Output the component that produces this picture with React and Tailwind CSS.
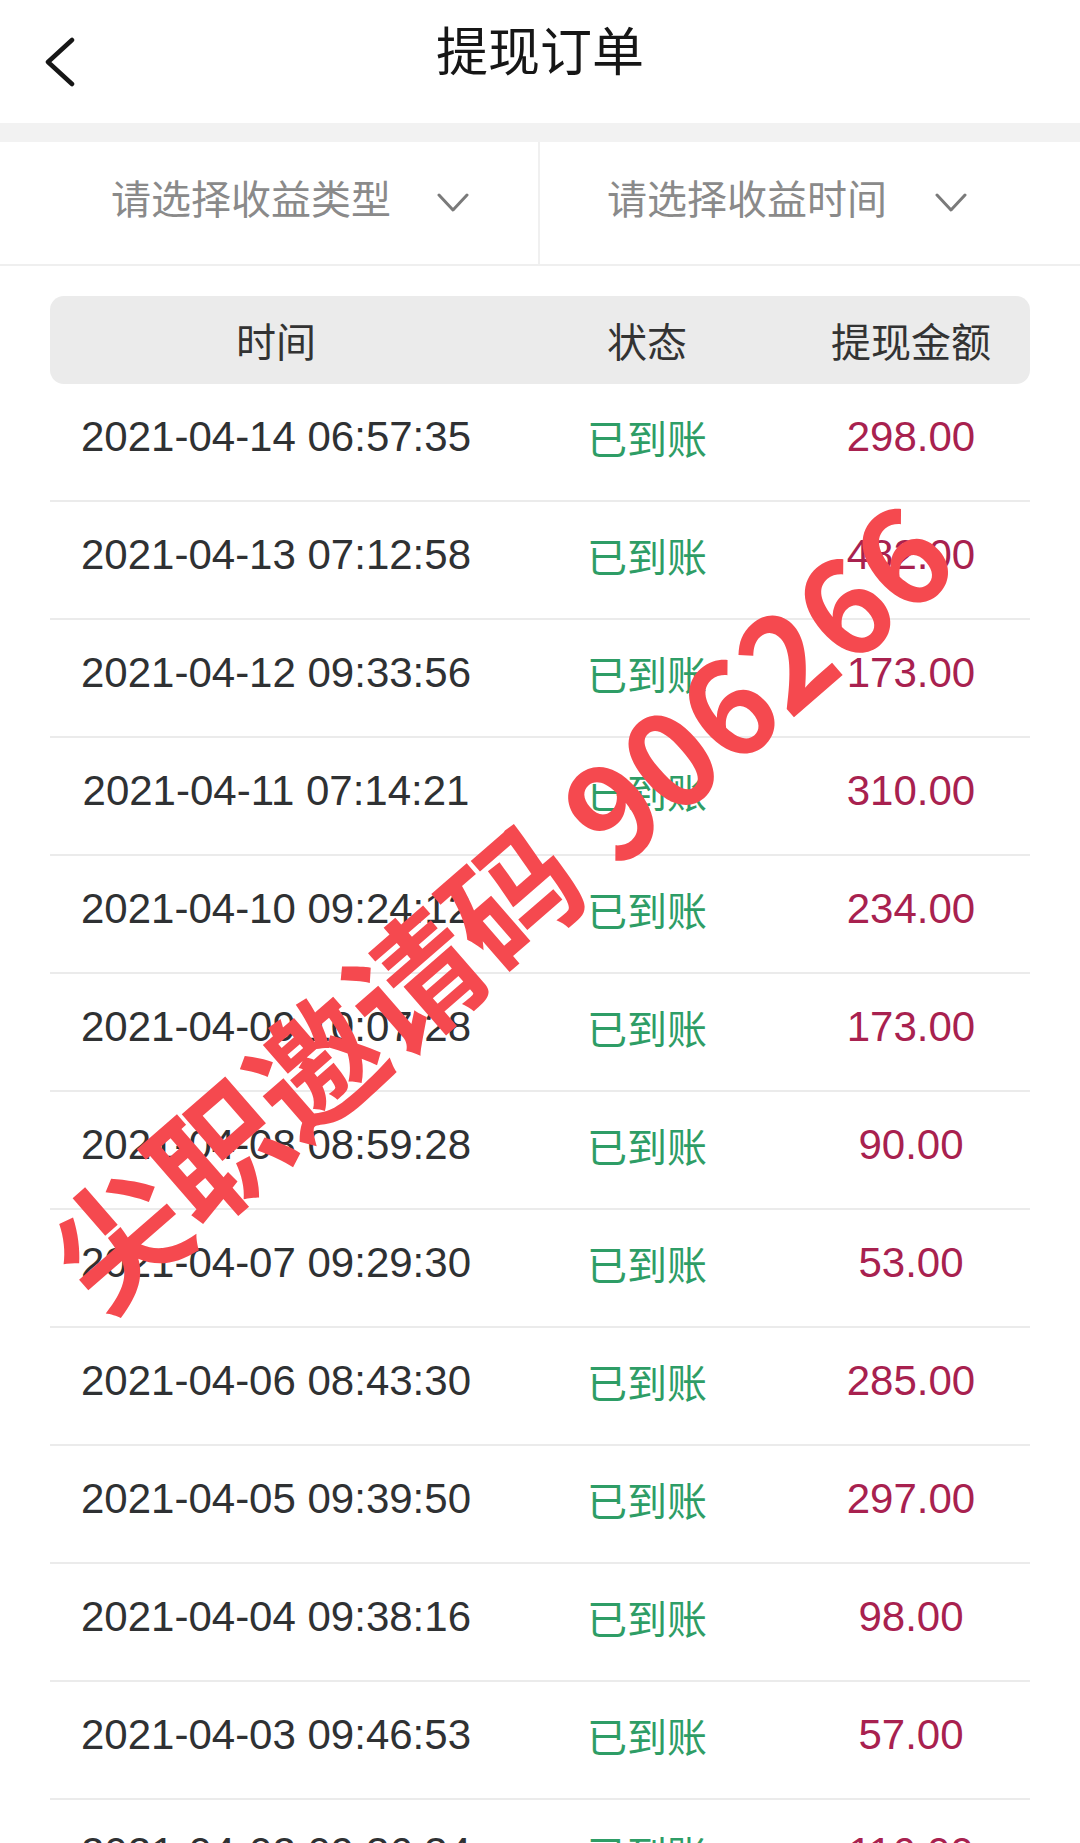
import React from "react";

const rows = [
  ["2021-04-14 06:57:35", "298.00"],
  ["2021-04-13 07:12:58", "482.00"],
  ["2021-04-12 09:33:56", "173.00"],
  ["2021-04-11 07:14:21", "310.00"],
  ["2021-04-10 09:24:12", "234.00"],
  ["2021-04-09 10:07:28", "173.00"],
  ["2021-04-08 08:59:28", "90.00"],
  ["2021-04-07 09:29:30", "53.00"],
  ["2021-04-06 08:43:30", "285.00"],
  ["2021-04-05 09:39:50", "297.00"],
  ["2021-04-04 09:38:16", "98.00"],
  ["2021-04-03 09:46:53", "57.00"],
  ["2021-04-02 09:36:34", "116.00"],
];

const cjk = "font-['Noto_Sans_CJK_SC','Noto_Sans',sans-serif]";
const latin = "font-['Liberation_Sans','Noto_Sans_CJK_SC',sans-serif]";

function Chevron() {
  return (
    <svg width="32" height="20" viewBox="0 0 32 20" className="shrink-0">
      <path d="M2 2 L16 17 L30 2" fill="none" stroke="#7a7a7a" strokeWidth="3" strokeLinecap="round" strokeLinejoin="round" />
    </svg>
  );
}

export default function App() {
  return (
    <div className="relative w-[1080px] h-[1843px] overflow-hidden bg-white">
      {/* Header */}
      <div className="grid grid-cols-[120px_1fr_120px] items-center h-[123px]">
        <div className="flex items-center pl-[44px]">
          <svg width="34" height="50" viewBox="0 0 34 50">
            <path d="M28 3 L4 25 L28 47" fill="none" stroke="#161616" strokeWidth="4.5" strokeLinecap="round" strokeLinejoin="round" />
          </svg>
        </div>
        <div className={`${cjk} text-center text-[52px] leading-none text-[#161616] pb-[26px]`}>提现订单</div>
        <div />
      </div>
      <div className="h-[19px] bg-[#f2f2f2]" />

      {/* Filters */}
      <div className="grid grid-cols-2 h-[124px] border-b-2 border-[#efefef]">
        <div className="flex items-center justify-center gap-[46px] border-r-2 border-[#f0f0f0] pl-[42px]">
          <span className={`${cjk} text-[40px] leading-none text-[#8a8a8a] pb-[12px]`}>请选择收益类型</span>
          <Chevron />
        </div>
        <div className="flex items-center justify-center gap-[48px] pr-[46px]">
          <span className={`${cjk} text-[40px] leading-none text-[#8a8a8a] pb-[12px]`}>请选择收益时间</span>
          <Chevron />
        </div>
      </div>

      {/* Table */}
      <div className="px-[50px] pt-[30px]">
        <div className="grid grid-cols-[452px_290px_1fr] items-center h-[88px] rounded-[14px] bg-[#ebebeb]">
          <div className={`${cjk} text-center text-[40px] leading-none text-[#333333]`}>时间</div>
          <div className={`${cjk} text-center text-[40px] leading-none text-[#333333]`}>状态</div>
          <div className={`${cjk} text-center text-[40px] leading-none text-[#333333]`}>提现金额</div>
        </div>
        {rows.map(([t, a], i) => (
          <div key={i} className="grid grid-cols-[452px_290px_1fr] items-center h-[118px] border-b-2 border-[#ebebeb] pb-[10px]">
            <div className={`${latin} text-center text-[42px] leading-none text-[#2f3133]`}>{t}</div>
            <div className={`${cjk} text-center text-[40px] leading-none text-[#2e9d66]`}>已到账</div>
            <div className={`${latin} text-center text-[42px] leading-none text-[#a8214f]`}>{a}</div>
          </div>
        ))}
      </div>

      {/* Watermark */}
      <div className={`absolute left-[496px] top-[901px] -translate-x-1/2 -translate-y-1/2 -rotate-[41deg] whitespace-nowrap ${cjk} font-bold text-[130px] leading-none text-[#f5494f] pointer-events-none`}>
        尖职邀请码 906266
      </div>
    </div>
  );
}
